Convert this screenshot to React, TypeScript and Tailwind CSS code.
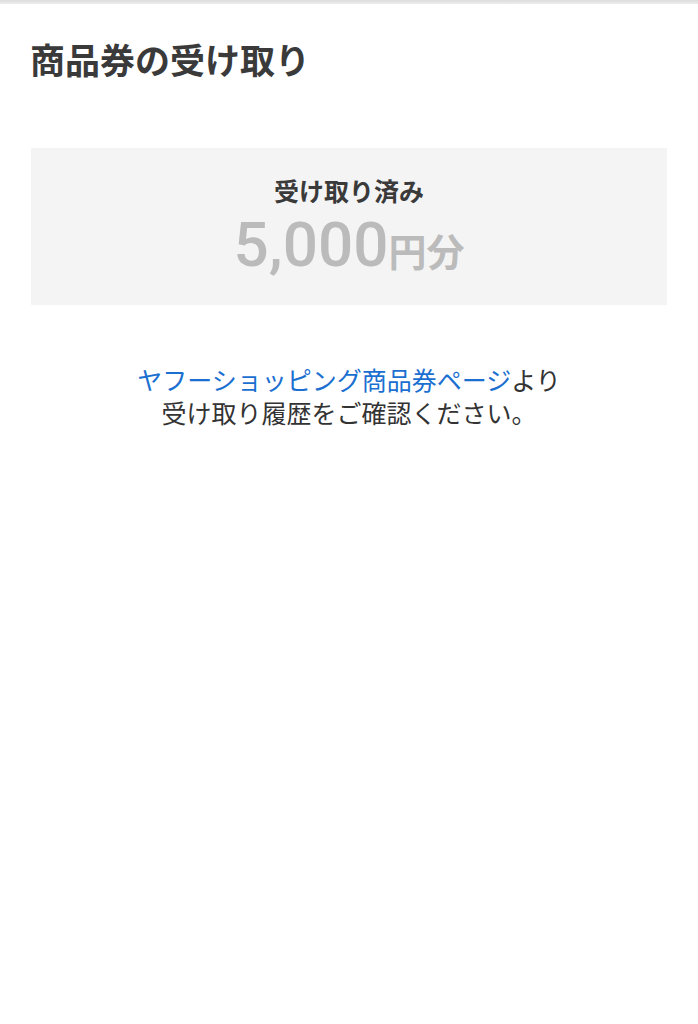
export default function App() {
  return (
    <div
      className="min-h-screen bg-white text-[#333]"
      style={{ fontFamily: '"Noto Sans CJK JP", "Liberation Sans", sans-serif' }}
    >
      <div className="h-[4px] bg-gradient-to-b from-[#dcdcdc] to-[#ececec]" />
      <h1 className="px-[30px] pt-[30px] text-[35px] font-bold leading-[50px] text-[#3a3a3a]">
        商品券の受け取り
      </h1>
      <div className="mx-[31px] mt-[64px] flex h-[157px] flex-col items-center bg-[#f4f4f4] pt-[26px]">
        <p className="text-[25px] font-bold leading-[32px] text-[#3a3a3a]">受け取り済み</p>
        <p className="mt-[6px] flex items-baseline text-[#bbbbbb]">
          <span
            className="text-[62px] font-medium leading-[66px]"
            style={{ fontFamily: 'Roboto, "Liberation Sans", sans-serif' }}
          >
            5,000
          </span>
          <span className="text-[38px] font-bold leading-[40px]">円分</span>
        </p>
      </div>
      <div className="mt-[58px] flex flex-col items-center text-[25px] leading-[33px] text-[#333]">
        <p>
          <a href="#" className="text-[#1a6fd0]">
            ヤフーショッピング商品券ページ
          </a>
          より
        </p>
        <p>受け取り履歴をご確認ください。</p>
      </div>
    </div>
  );
}
